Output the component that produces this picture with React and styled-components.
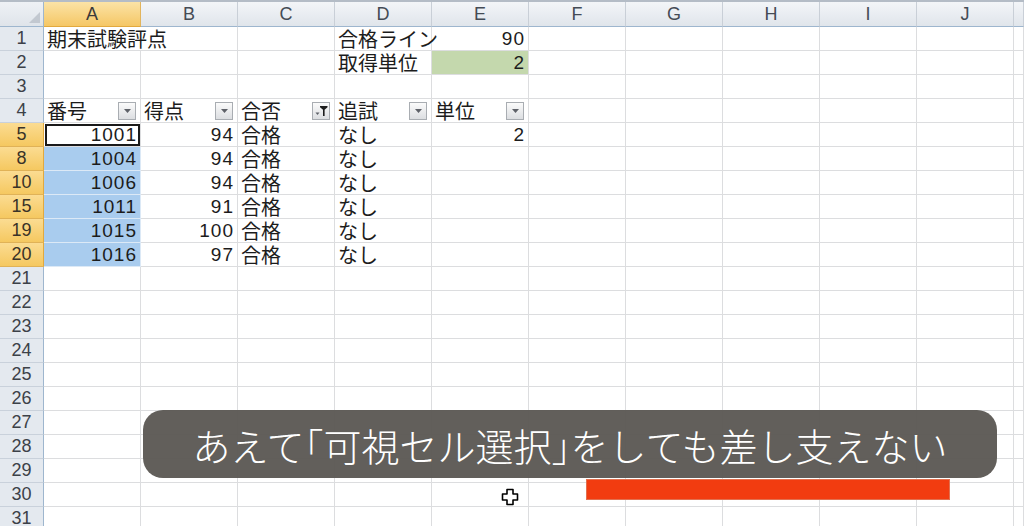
import React from "react";
import styled, { createGlobalStyle, css } from "styled-components";

const GlobalStyle = createGlobalStyle`
    html, body {
        margin: 0;
        padding: 0;
        background: #ffffff;
        overflow: hidden;
    }
`;

const Page = styled.div`
    position: relative;
    width: 1024px;
    height: 526px;
    overflow: hidden;
    background: #ffffff;
    font-family: "Liberation Sans", "Noto Sans CJK JP", sans-serif;
`;

const Sheet = styled.div`
    display: grid;
    grid-template-columns: 44px repeat(10, 97px) 1fr;
    grid-template-rows: 25px;
    grid-auto-rows: 24px;
    border-top: 2px solid #b4bcc6;
`;

const Corner = styled.div`
    display: flex;
    align-items: flex-end;
    justify-content: flex-end;
    padding: 0 3px 3px 0;
    background: linear-gradient(#eef1f5, #dfe4ea);
    border-right: 1px solid #9eb6ce;
    border-bottom: 1px solid #9eb6ce;
`;

const ColHead = styled.div`
    display: flex;
    align-items: center;
    justify-content: center;
    font-size: 18px;
    color: #444b55;
    background: linear-gradient(#f3f5f8, #e0e5eb);
    border-right: 1px solid #c9cfd7;
    border-bottom: 1px solid #9eb6ce;
    ${(p) =>
        p.$active &&
        css`
            background: linear-gradient(#fbe3a6, #f5c766);
            border-right-color: #e2b45c;
            border-bottom-color: #e2a93e;
            color: #3a3a3a;
        `}
`;

const RowHead = styled.div`
    display: flex;
    align-items: center;
    justify-content: center;
    font-size: 18px;
    color: #3c4148;
    background: #e4e9ef;
    border-right: 1px solid #9eb6ce;
    border-bottom: 1px solid #c9d1db;
    ${(p) =>
        p.$active &&
        css`
            background: linear-gradient(#fbdc92, #f5c860);
            border-bottom-color: #e0b257;
            border-right-color: #e2a93e;
            color: #3a3328;
        `}
`;

const Cell = styled.div`
    display: flex;
    align-items: center;
    justify-content: ${(p) => (p.$num ? "flex-end" : "space-between")};
    padding: 0 3px 0 3px;
    box-sizing: border-box;
    font-size: ${(p) => (p.$num ? "19px" : "20px")};
    letter-spacing: ${(p) => (p.$num ? "1px" : "0")};
    color: #1c1c1c;
    white-space: nowrap;
    overflow: visible;
    min-width: 0;
    border-right: ${(p) => (p.$spill ? "none" : "1px solid #dcdddf")};
    border-bottom: 1px solid #dcdddf;
    background: ${(p) =>
        p.$fill === "green" ? "#c4d8ad" : p.$fill === "blue" ? "#a9ccee" : "transparent"};
    ${(p) =>
        p.$fill === "blue" &&
        css`
            border-bottom-color: #dce9f6;
            border-right-color: #dce9f6;
        `}
    ${(p) =>
        p.$current &&
        css`
            outline: 2px solid #1a1a1a;
            outline-offset: -3px;
        `}
`;

const FilterBtn = styled.span`
    display: flex;
    align-items: center;
    justify-content: center;
    width: 18px;
    height: 18px;
    box-sizing: border-box;
    margin-right: 1px;
    border: 1px solid #a9adb2;
    background: linear-gradient(#fbfbfb, #dcdee1);
`;

const Caption = styled.div`
    position: absolute;
    left: 143px;
    top: 410px;
    width: 854px;
    height: 68px;
    border-radius: 20px;
    background: rgba(92, 88, 84, 0.96);
    color: #ffffff;
    display: flex;
    align-items: center;
    justify-content: center;
    font-family: "Noto Sans CJK JP", sans-serif;
    font-size: 38px;
    font-weight: 300;
    letter-spacing: 0;
`;

const Bracket = styled.span`
    font-feature-settings: "halt";
`;

const Underline = styled.div`
    position: absolute;
    left: 587px;
    top: 480px;
    width: 362px;
    height: 19px;
    background: #f23c10;
    box-shadow: 0 0 0 1px #e2704f;
`;

const Cursor = styled.svg`
    position: absolute;
    left: 501px;
    top: 488px;
`;

const CornerMark = () => (
    <svg width="11" height="11" viewBox="0 0 11 11">
        <polygon points="11,0 11,11 0,11" fill="#c2c8d0" />
    </svg>
);

const DropArrow = () => (
    <svg width="9" height="6" viewBox="0 0 9 6">
        <polygon points="1,1 8,1 4.5,5" fill="#5e6168" />
    </svg>
);

const FunnelIcon = () => (
    <svg width="13" height="13" viewBox="0 0 13 13">
        <polygon points="0.5,8.5 4.5,8.5 2.5,11" fill="#5e6168" />
        <polygon points="5,2 12.5,2 12.5,3.2 9.6,5.8 9.6,12 8,12 8,5.8 5,3.2" fill="#1d1d1d" />
    </svg>
);

const columns = ["A", "B", "C", "D", "E", "F", "G", "H", "I", "J", ""];

const rows = [
    { n: 1, cells: { A: { text: "期末試験評点", spill: true }, D: { text: "合格ライン" }, E: { text: "90", num: true } } },
    { n: 2, cells: { D: { text: "取得単位" }, E: { text: "2", num: true, fill: "green" } } },
    { n: 3, cells: {} },
    {
        n: 4,
        cells: {
            A: { text: "番号", filter: "arrow" },
            B: { text: "得点", filter: "arrow" },
            C: { text: "合否", filter: "funnel" },
            D: { text: "追試", filter: "arrow" },
            E: { text: "単位", filter: "arrow" },
        },
    },
    { n: 5, sel: true, id: "1001", score: "94", unit: "2", current: true },
    { n: 8, sel: true, id: "1004", score: "94" },
    { n: 10, sel: true, id: "1006", score: "94" },
    { n: 15, sel: true, id: "1011", score: "91" },
    { n: 19, sel: true, id: "1015", score: "100" },
    { n: 20, sel: true, id: "1016", score: "97" },
];

for (let i = 21; i <= 31; i++) rows.push({ n: i, cells: {} });

function dataCells(row) {
    if (!row.id) return row.cells;
    return {
        A: { text: row.id, num: true, fill: row.current ? null : "blue", current: row.current },
        B: { text: row.score, num: true },
        C: { text: "合格" },
        D: { text: "なし" },
        E: row.unit ? { text: row.unit, num: true } : undefined,
    };
}

function SheetCell({ cell }) {
    if (!cell) return <Cell />;
    return (
        <Cell $num={cell.num} $fill={cell.fill} $spill={cell.spill} $current={cell.current}>
            <span>{cell.text}</span>
            {cell.filter && (
                <FilterBtn>{cell.filter === "funnel" ? <FunnelIcon /> : <DropArrow />}</FilterBtn>
            )}
        </Cell>
    );
}

export default function App() {
    return (
        <Page>
            <GlobalStyle />
            <Sheet>
                <Corner>
                    <CornerMark />
                </Corner>
                {columns.map((c, i) => (
                    <ColHead key={"h" + i} $active={c === "A"}>
                        {c}
                    </ColHead>
                ))}
                {rows.map((row) => {
                    const cells = dataCells(row);
                    return (
                        <React.Fragment key={row.n}>
                            <RowHead $active={row.sel}>{row.n}</RowHead>
                            {columns.map((c, i) => (
                                <SheetCell key={i} cell={c ? cells[c] : undefined} />
                            ))}
                        </React.Fragment>
                    );
                })}
            </Sheet>
            <Caption>
                あえて<Bracket>「</Bracket>可視セル選択<Bracket>」</Bracket>をしても差し支えない
            </Caption>
            <Underline />
            <Cursor width="18" height="18" viewBox="0 0 18 18">
                <path
                    d="M6 1.5h6v4.5h4.5v6H12v4.5H6V12H1.5V6H6z"
                    fill="#ffffff"
                    stroke="#000000"
                    strokeWidth="1.6"
                    strokeLinejoin="round"
                />
            </Cursor>
        </Page>
    );
}
